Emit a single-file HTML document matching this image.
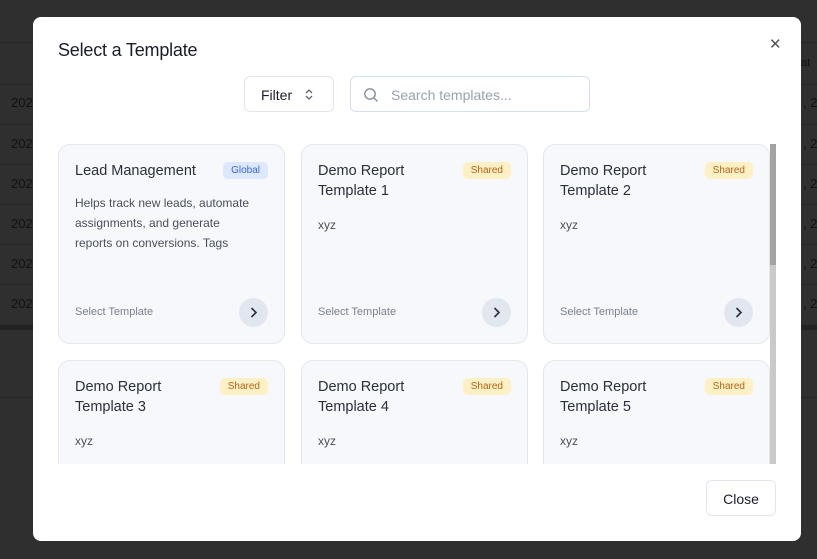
<!DOCTYPE html>
<html><head><style>
*{box-sizing:border-box;margin:0;padding:0}
body{width:817px;height:559px;overflow:hidden;background:#2f2f2f;font-family:"Liberation Sans",sans-serif;position:relative}
.bgline{position:absolute;left:0;right:0;height:1px;background:#262626}
.bgt{position:absolute;font-size:13px;color:#111;white-space:nowrap}
.modal{position:absolute;left:33px;top:17px;width:768px;height:524px;background:#fff;border-radius:8px}
h1{position:absolute;left:25px;top:23px;font-size:18px;font-weight:normal;color:#1a1d29;letter-spacing:-0.2px}
.x{position:absolute;left:736px;top:18px;font-size:15px;color:#555}
.filter{position:absolute;left:211px;top:59px;width:90px;height:36px;border:1px solid #e2e5ec;border-radius:6px;font-size:14px;color:#1a1d29;padding:10px 0 0 16px}
.search{position:absolute;left:317px;top:59px;width:240px;height:36px;border:1px solid #d6deef;border-radius:6px;font-size:14px;color:#9aa0ad;padding:10px 0 0 40px}
.card{position:absolute;width:227px;height:200px;background:#f7f8fb;border:1px solid #e1e6ef;border-radius:12px}
.t{position:absolute;left:16px;top:16px;font-size:14.5px;color:#2a2f3c;line-height:20px;width:140px}
.b{position:absolute;right:16px;top:17px;font-size:10px;padding:3px 8px;border-radius:5px}
.sh{background:#fdf0c4;color:#b4641c}.gl{background:#dde8fc;color:#3b66e0}
.d{position:absolute;left:16px;top:70px;font-size:12px;color:#4a4f5c;line-height:20px;width:190px}
.s{position:absolute;left:16px;top:161px;font-size:11px;color:#7a8090}
.arr{position:absolute;right:16px;top:153px;width:29px;height:29px;border-radius:50%;background:#e2e6ee}
.clip{position:absolute;left:0;top:127px;width:768px;height:320px;overflow:hidden}
.close{position:absolute;left:673px;top:463px;width:70px;height:36px;border:1px solid #e2e5ec;border-radius:6px;font-size:14px;color:#1a1d29;text-align:center;padding-top:10px}
</style></head><body>
<div class="bgline" style="top:42px"></div><div class="bgline" style="top:84px"></div>
<div class="bgline" style="top:124px"></div><div class="bgline" style="top:164px"></div>
<div class="bgline" style="top:204px"></div><div class="bgline" style="top:244px"></div>
<div class="bgline" style="top:284px"></div><div class="bgline" style="top:325px;height:5px;background:#222"></div>
<div class="bgline" style="top:397px"></div>
<div class="bgt" style="left:11px;top:95px">202</div><div class="bgt" style="left:11px;top:136px">202</div>
<div class="bgt" style="left:11px;top:176px">202</div><div class="bgt" style="left:11px;top:216px">202</div>
<div class="bgt" style="left:11px;top:256px">202</div><div class="bgt" style="left:11px;top:296px">202</div>
<div class="bgt" style="left:801px;top:57px;font-size:11px">at</div>
<div class="bgt" style="left:803px;top:95px">, 2</div><div class="bgt" style="left:803px;top:136px">, 2</div>
<div class="bgt" style="left:803px;top:176px">, 2</div><div class="bgt" style="left:803px;top:216px">, 2</div>
<div class="bgt" style="left:803px;top:256px">, 2</div><div class="bgt" style="left:803px;top:296px">, 2</div>
<div class="modal">
<h1>Select a Template</h1>
<div class="x">✕</div>
<div class="filter">Filter<svg style="position:absolute;left:59px;top:11px" width="10" height="13" viewBox="0 0 10 13"><path d="M2 5l3-3 3 3M2 8l3 3 3-3" fill="none" stroke="#666" stroke-width="1.3"/></svg></div>
<div class="search"><svg style="position:absolute;left:12px;top:10px" width="16" height="16" viewBox="0 0 16 16"><circle cx="7" cy="7" r="5.2" fill="none" stroke="#8a909c" stroke-width="1.4"/><path d="M11 11l3.5 3.5" stroke="#8a909c" stroke-width="1.4"/></svg>Search templates...</div>
<div class="clip">
<div class="card" style="left:25px;top:0"><div class="t">Lead Management</div><div class="b gl">Global</div><div class="d" style="top:48px;width:180px">Helps track new leads, automate assignments, and generate reports on conversions. Tags</div><div class="s">Select Template</div><div class="arr"><svg width="29" height="29"><path d="M12.5 10l4.5 4.5-4.5 4.5" fill="none" stroke="#2a2f3c" stroke-width="1.6"/></svg></div></div>
<div class="card" style="left:268px;top:0"><div class="t">Demo Report Template 1</div><div class="b sh">Shared</div><div class="d">xyz</div><div class="s">Select Template</div><div class="arr"><svg width="29" height="29"><path d="M12.5 10l4.5 4.5-4.5 4.5" fill="none" stroke="#2a2f3c" stroke-width="1.6"/></svg></div></div>
<div class="card" style="left:510px;top:0"><div class="t">Demo Report Template 2</div><div class="b sh">Shared</div><div class="d">xyz</div><div class="s">Select Template</div><div class="arr"><svg width="29" height="29"><path d="M12.5 10l4.5 4.5-4.5 4.5" fill="none" stroke="#2a2f3c" stroke-width="1.6"/></svg></div></div>
<div class="card" style="left:25px;top:216px"><div class="t">Demo Report Template 3</div><div class="b sh">Shared</div><div class="d">xyz</div></div>
<div class="card" style="left:268px;top:216px"><div class="t">Demo Report Template 4</div><div class="b sh">Shared</div><div class="d">xyz</div></div>
<div class="card" style="left:510px;top:216px"><div class="t">Demo Report Template 5</div><div class="b sh">Shared</div><div class="d">xyz</div></div>
<div style="position:absolute;left:737px;top:0;width:6px;height:320px;background:#c9c9c9"></div>
<div style="position:absolute;left:737px;top:0;width:6px;height:121px;background:#a3a3a3"></div>
</div>
<div class="close">Close</div>
</div>
</body></html>
